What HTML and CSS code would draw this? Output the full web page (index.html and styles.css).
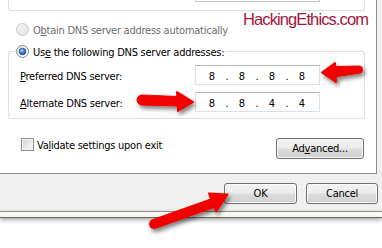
FILE: index.html
```html
<!DOCTYPE html>
<html>
<head>
<meta charset="utf-8">
<link rel="stylesheet" href="styles.css">
</head>
<body>
<div class="screen">
  <div class="window">
    <div class="tabpage">
      <div class="group-top">
        <div class="ip-stub"></div>
      </div>

      <div class="radio-row disabled">
        <svg class="radio" width="13" height="13" viewBox="0 0 13 13">
          <defs>
            <linearGradient id="rdis" x1="0" y1="0" x2="1" y2="1">
              <stop offset="0" stop-color="#f6f6f6"/>
              <stop offset="1" stop-color="#e2e2e2"/>
            </linearGradient>
          </defs>
          <circle cx="6.5" cy="6.5" r="6" fill="url(#rdis)" stroke="#c9c9c9"/>
        </svg>
        <span class="label">O<u>b</u>tain DNS server address automatically</span>
      </div>

      <div class="group-head">
        <span class="cap cap-l"></span>
        <div class="legend">
          <svg class="radio" width="13" height="13" viewBox="0 0 13 13">
            <defs>
              <linearGradient id="rchk" x1="0" y1="0" x2="1" y2="1">
                <stop offset="0" stop-color="#dcdcdc"/>
                <stop offset="1" stop-color="#ffffff"/>
              </linearGradient>
              <radialGradient id="rdot" cx="0.4" cy="0.35" r="0.75">
                <stop offset="0" stop-color="#b4e2ff"/>
                <stop offset="0.45" stop-color="#3f83dc"/>
                <stop offset="1" stop-color="#173c88"/>
              </radialGradient>
            </defs>
            <circle cx="6.5" cy="6.5" r="6" fill="url(#rchk)" stroke="#8b8d90"/>
            <circle cx="6.5" cy="6.5" r="3.3" fill="url(#rdot)" stroke="#24447e" stroke-width="0.7"/>
          </svg>
          <span class="label">Us<u>e</u> the following DNS server addresses:</span>
        </div>
        <span class="cap cap-r"></span>
      </div>

      <div class="group-body">
        <div class="field-row">
          <span class="field-label"><u>P</u>referred DNS server:</span>
          <div class="ipbox">
            <span class="oct">8</span><span class="dot">.</span>
            <span class="oct">8</span><span class="dot">.</span>
            <span class="oct">8</span><span class="dot">.</span>
            <span class="oct">8</span>
          </div>
        </div>
        <div class="field-row">
          <span class="field-label"><u>A</u>lternate DNS server:</span>
          <div class="ipbox">
            <span class="oct">8</span><span class="dot">.</span>
            <span class="oct">8</span><span class="dot">.</span>
            <span class="oct">4</span><span class="dot">.</span>
            <span class="oct">4</span>
          </div>
        </div>
      </div>

      <div class="options-row">
        <div class="check-row">
          <span class="checkbox"></span>
          <span class="label">Va<u>l</u>idate settings upon exit</span>
        </div>
        <button class="btn btn-adv">Ad<u>v</u>anced...</button>
      </div>
    </div>

    <div class="footer">
      <button class="btn btn-ok">OK</button>
      <button class="btn btn-cancel">Cancel</button>
    </div>
    <div class="frame-bottom"></div>
  </div>

  <div class="watermark">HackingEthics.com</div>

  <svg class="arrows" width="382" height="248" viewBox="0 0 382 248">
    <defs>
      <filter id="sh" x="-40%" y="-40%" width="180%" height="180%">
        <feDropShadow dx="2" dy="3" stdDeviation="2" flood-color="#000" flood-opacity="0.5"/>
      </filter>
    </defs>
    <g fill="#f20000" stroke="#f20000" stroke-linejoin="round">
      <g filter="url(#sh)">
        <path d="M334 66.5 L359 66 A3.6 3.6 0 0 1 359 73.2 L334 77 Z" stroke-width="1"/>
        <polygon points="322,72.5 335,63 336,82" stroke-width="2"/>
      </g>
      <g filter="url(#sh)">
        <path d="M142 95 L178 96.5 L178 106 L142 105 A5 5 0 0 1 142 95 Z" stroke-width="1"/>
        <polygon points="193,102 177,92 178,111" stroke-width="2"/>
      </g>
      <g filter="url(#sh)">
        <path d="M154 224 L213 203" stroke-width="10" stroke-linecap="round" fill="none"/>
        <polygon points="209,193.5 227.5,194.5 216,211.5" stroke-width="2"/>
      </g>
    </g>
  </svg>
</div>
</body>
</html>
```

FILE: styles.css
```css
html, body {
  margin: 0;
  padding: 0;
  background: #ffffff;
}

.screen {
  position: relative;
  width: 382px;
  height: 248px;
  overflow: hidden;
  background: #ffffff;
  font-family: "DejaVu Sans Condensed", "DejaVu Sans", sans-serif;
  font-stretch: condensed;
  font-size: 11px;
  letter-spacing: -0.25px;
  color: #000;
}

.window {
  display: flex;
  flex-direction: column;
  width: 382px;
  background: #f0f0f0;
}

.tabpage {
  box-sizing: border-box;
  width: 377px;
  height: 174px;
  background: #ffffff;
  border-right: 1px solid #898c95;
  border-bottom: 1px solid #898c95;
  padding: 0 11px 0 8px;
  display: flex;
  flex-direction: column;
}

.group-top {
  box-sizing: border-box;
  height: 11px;
  border: 1px solid #d5dfe5;
  border-top: none;
  border-radius: 0 0 3px 3px;
}

.ip-stub {
  box-sizing: border-box;
  width: 125px;
  height: 2px;
  margin-left: 186px;
  border: 1px solid #c4c7cc;
  border-top: none;
}

.label {
  line-height: 13px;
  white-space: nowrap;
}

u {
  text-decoration: underline;
  text-underline-offset: 1px;
}

.radio {
  display: block;
  flex: 0 0 13px;
}

.radio-row {
  display: flex;
  align-items: center;
  gap: 4px;
  height: 13px;
  margin: 12px 0 0 8px;
}

.radio-row.disabled .label {
  color: #6d6d6d;
  padding-top: 1px;
}

.group-head {
  display: flex;
  align-items: flex-end;
  height: 13px;
  margin-top: 9px;
}

.cap {
  box-sizing: border-box;
  height: 7px;
  border-top: 1px solid #d5dfe5;
}

.cap-l {
  flex: 0 0 8px;
  border-left: 1px solid #d5dfe5;
  border-top-left-radius: 3px;
}

.cap-r {
  flex: 1 1 auto;
  border-right: 1px solid #d5dfe5;
  border-top-right-radius: 3px;
}

.legend {
  display: flex;
  align-items: center;
  gap: 4px;
  height: 13px;
  padding-right: 2px;
}

.legend .label {
  padding-top: 1px;
}

.group-body {
  box-sizing: border-box;
  border: 1px solid #d5dfe5;
  border-top: none;
  border-radius: 0 0 3px 3px;
  padding: 7px 44px 6px 11px;
  display: flex;
  flex-direction: column;
  gap: 7px;
}

.field-row {
  display: flex;
  align-items: center;
  height: 20px;
}

.field-label {
  flex: 0 0 175px;
  line-height: 13px;
  padding-top: 2px;
  white-space: nowrap;
}

.ipbox {
  box-sizing: border-box;
  width: 125px;
  height: 20px;
  background: #fff;
  border: 1px solid #dbdfe6;
  border-top-color: #b3b6bc;
  display: flex;
  align-items: center;
  padding: 2px 0 0 5px;
  letter-spacing: 0;
}

.oct {
  width: 22px;
  text-align: center;
  line-height: 13px;
}

.dot {
  width: 8px;
  text-align: center;
  line-height: 13px;
}

.options-row {
  display: flex;
  align-items: flex-start;
  margin-top: 19px;
}

.check-row {
  display: flex;
  align-items: center;
  gap: 3px;
  height: 13px;
  margin-left: 13px;
}

.check-row .label {
  padding-top: 1px;
}

.checkbox {
  box-sizing: border-box;
  width: 13px;
  height: 13px;
  border: 1px solid #8e8f8f;
  background: linear-gradient(135deg, #cfcfcf 0%, #e9e9e9 55%, #fbfbfb 100%);
  box-shadow: inset 0 0 0 1px #f4f4f4;
}

.btn {
  box-sizing: border-box;
  height: 21px;
  padding: 0;
  border: 1px solid #707070;
  border-radius: 3px;
  background: linear-gradient(#f3f3f3 0%, #ebebeb 48%, #dddddd 52%, #cfcfcf 100%);
  box-shadow: inset 0 0 0 1px #fbfbfb;
  font-family: inherit;
  font-stretch: condensed;
  font-size: 11px;
  font-weight: normal;
  letter-spacing: -0.25px;
  line-height: 17px;
  color: #000;
}

.btn-adv {
  width: 88px;
  margin: 0 1px 0 auto;
}

.footer {
  box-sizing: border-box;
  height: 37px;
  display: flex;
  justify-content: flex-end;
  align-items: flex-start;
  gap: 9px;
  padding: 9px 4px 0 0;
}

.btn-ok {
  width: 73px;
}

.btn-cancel {
  width: 72px;
}

.frame-bottom {
  box-sizing: border-box;
  height: 7px;
  border-top: 1px solid #8c8c8c;
  border-bottom: 1px solid #666666;
  background: linear-gradient(#fbfbf3, #f6f6ea);
  box-shadow: 0 2px 4px rgba(0, 0, 0, 0.35);
}

.watermark {
  position: absolute;
  left: 243px;
  top: 11px;
  font-family: "Liberation Sans", Arial, sans-serif;
  font-stretch: normal;
  font-size: 16.5px;
  line-height: 16px;
  letter-spacing: -0.9px;
  color: #a4163a;
  white-space: nowrap;
}

.arrows {
  position: absolute;
  left: 0;
  top: 0;
  pointer-events: none;
}
```
